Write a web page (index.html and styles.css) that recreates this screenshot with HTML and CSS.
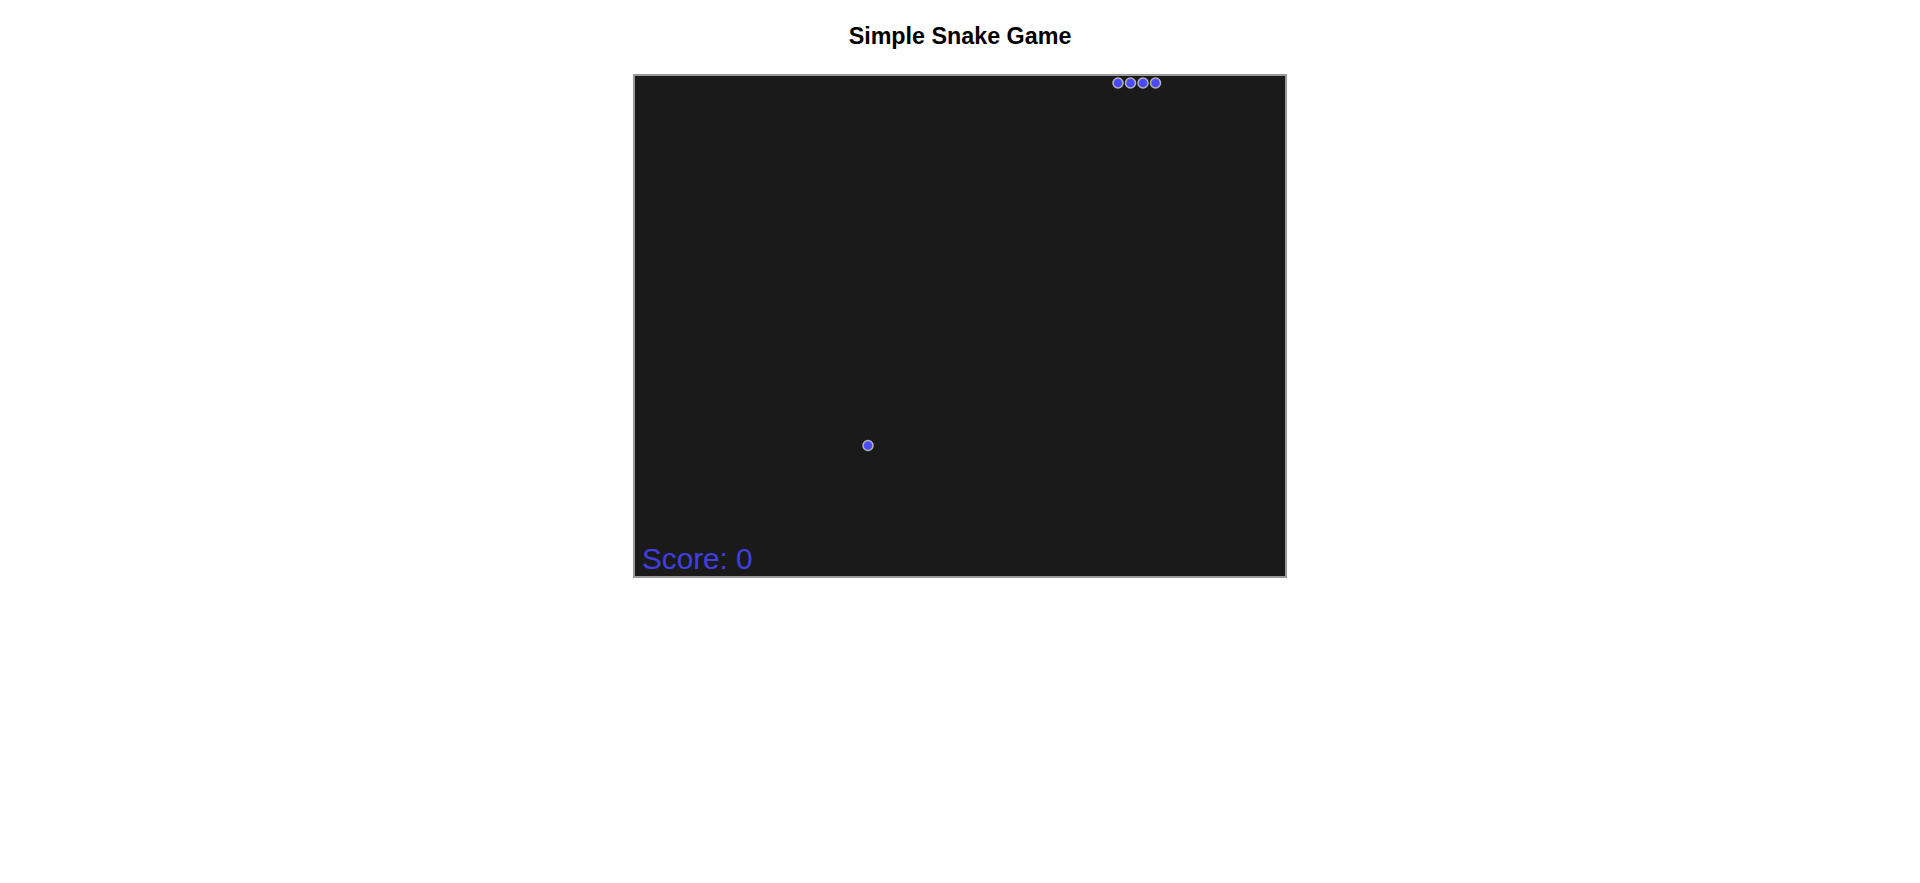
FILE: index.html
```html
<!DOCTYPE html>
<html lang="en">
<head>
<meta charset="utf-8">
<title>Simple Snake Game</title>
<link rel="stylesheet" href="styles.css">
</head>
<body>
<h1 class="title">Simple Snake Game</h1>
<div class="board">
  <svg class="board-canvas" width="650" height="500" viewBox="0 0 650 500">
    <g class="snake">
      <circle cx="483" cy="7" r="5"/>
      <circle cx="495.5" cy="7" r="5"/>
      <circle cx="508" cy="7" r="5"/>
      <circle cx="520.5" cy="7" r="5"/>
    </g>
    <g class="food">
      <circle cx="233" cy="369.5" r="5"/>
    </g>
    <text class="score" x="7" y="493">Score: 0</text>
  </svg>
</div>
</body>
</html>
```
FILE: styles.css
```css
html, body {
  margin: 0;
  padding: 0;
  background: #ffffff;
}

body {
  font-family: "Liberation Sans", Arial, sans-serif;
  color: #000;
}

.title {
  margin: 23px 0 24px;
  font-size: 23.3px;
  font-weight: bold;
  text-align: center;
  line-height: normal;
}

.board {
  width: 650px;
  height: 500px;
  margin: 0 auto;
  border: 2px solid #999999;
  background: #1a1a1a;
}

.board-canvas {
  display: block;
}

.snake circle,
.food circle {
  fill: #4a4aff;
  stroke: #b4b4b4;
  stroke-width: 1.5;
}

.score {
  font-family: "Liberation Sans", Arial, sans-serif;
  font-size: 29.7px;
  fill: #4040e0;
}
```
